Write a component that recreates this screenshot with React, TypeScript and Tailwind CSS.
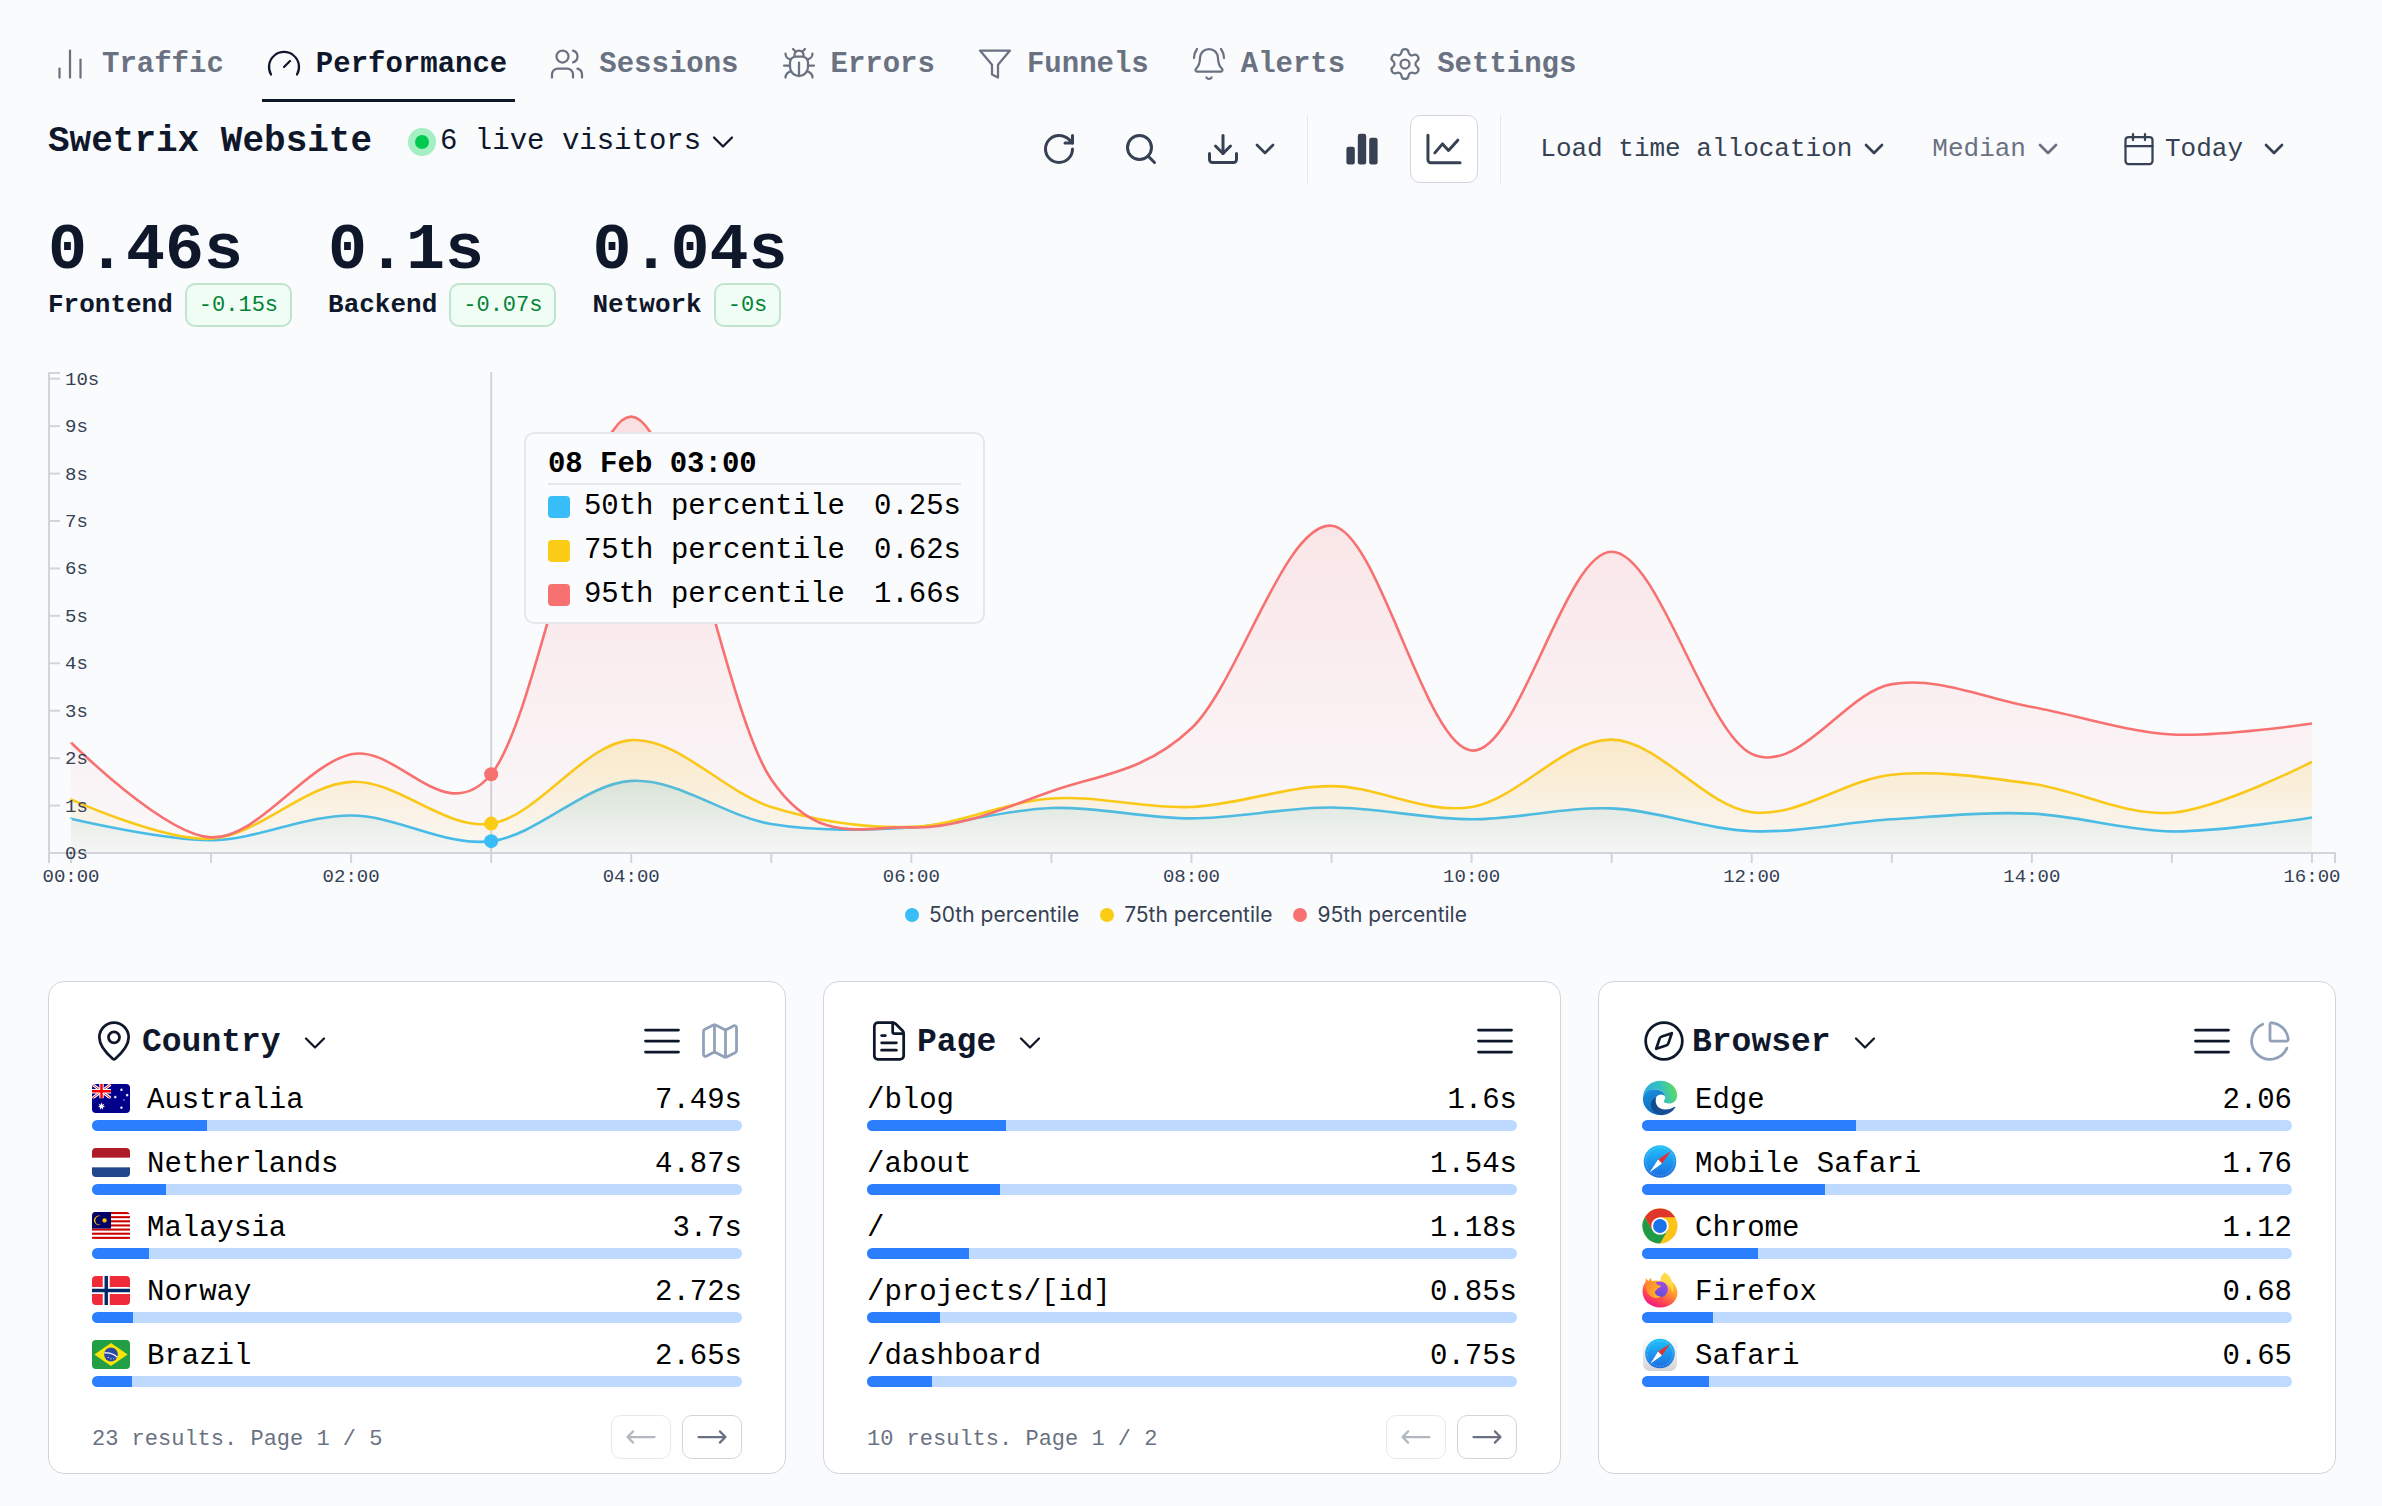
import React from "react";
import {
  BellRing,
  Bug,
  Calendar,
  ChartNoAxesColumn,
  ChartPie,
  ChevronDown,
  Compass,
  Download,
  FileText,
  Gauge,
  Map as MapIcon,
  MapPin,
  RotateCw,
  Search,
  Settings,
  Users,
} from "lucide-react";

/* ---------- Small icons ---------- */

type IconProps = { className?: string; strokeWidth?: number };

function FunnelIcon({ className, strokeWidth = 1.5 }: IconProps) {
  return (
    <svg viewBox="0 0 24 24" className={className} fill="none" stroke="currentColor" strokeWidth={strokeWidth} strokeLinecap="round" strokeLinejoin="round" aria-hidden="true">
      <path d="M22 3H2l8 9.46V19l4 2v-8.54L22 3z" />
    </svg>
  );
}

function LinesIcon({ className }: IconProps) {
  return (
    <svg viewBox="0 0 24 24" className={className} fill="none" stroke="currentColor" strokeWidth={1.5} strokeLinecap="round" aria-hidden="true">
      <path d="M3 6h18M3 12h18M3 18h18" />
    </svg>
  );
}

function BarsIcon({ className }: IconProps) {
  return (
    <svg viewBox="0 0 24 24" className={className} fill="currentColor" aria-hidden="true">
      <rect x="1.6" y="10.5" width="5.6" height="11.8" rx="1.5" />
      <rect x="9.2" y="1.8" width="5.6" height="20.5" rx="1.5" />
      <rect x="16.8" y="4.5" width="5.6" height="17.8" rx="1.5" />
    </svg>
  );
}

function LineChartIcon({ className }: IconProps) {
  return (
    <svg viewBox="0 0 24 24" className={className} fill="none" stroke="currentColor" strokeWidth={2} strokeLinecap="round" strokeLinejoin="round" aria-hidden="true">
      <path d="M1.300 2.800V19.200a2 2 0 0 0 2 2H22.700" />
      <path d="M5.900 14.600 11 8.600l4 4.400 6.200-6.900" />
    </svg>
  );
}

function LongArrow({ flip }: { flip?: boolean }) {
  return (
    <svg viewBox="0 0 24 24" className="size-9" fill="none" stroke="currentColor" strokeWidth={1.5} strokeLinecap="round" strokeLinejoin="round" aria-hidden="true">
      <path d={flip ? "M6.75 15.75 3 12m0 0 3.75-3.75M3 12h18" : "M17.25 8.25 21 12m0 0-3.75 3.75M21 12H3"} />
    </svg>
  );
}

/* ---------- Flags ---------- */

function star(cx: number, cy: number, r: number, points: number, inner: number) {
  return Array.from({ length: points * 2 }, (_, i) => {
    const a = (Math.PI * i) / points - Math.PI / 2;
    const d = i % 2 ? r * inner : r;
    return `${(cx + d * Math.cos(a)).toFixed(2)},${(cy + d * Math.sin(a)).toFixed(2)}`;
  }).join(" ");
}

function Flag({ label, children }: { label: string; children: React.ReactNode }) {
  return (
    <svg viewBox="0 0 40 30" preserveAspectRatio="none" role="img" aria-label={label} className="h-[29px] w-[38px] shrink-0 rounded">
      {children}
    </svg>
  );
}

const australia = (
  <Flag label="Flag of Australia">
    <rect width="40" height="30" fill="#00008b" />
    <path d="M0 0 20 15M20 0 0 15" stroke="#fff" strokeWidth="3" />
    <path d="M0 0 20 15M20 0 0 15" stroke="#e8112d" strokeWidth="1" />
    <path d="M10 0v15M0 7.500h20" stroke="#fff" strokeWidth="4.600" />
    <path d="M10 0v15M0 7.500h20" stroke="#f00" strokeWidth="2.600" />
    <path d="M0 15h20.200V0H22v17H0z" fill="#00008b" />
    <g fill="#fff">
      <polygon points={star(10, 23, 4, 7, 0.45)} />
      <polygon points={star(31, 6, 1.8, 7, 0.5)} />
      <polygon points={star(24.5, 13.5, 1.8, 7, 0.5)} />
      <polygon points={star(37, 11.5, 1.8, 7, 0.5)} />
      <polygon points={star(31, 24.5, 1.8, 7, 0.5)} />
      <polygon points={star(33.6, 16.6, 1, 5, 0.5)} />
    </g>
  </Flag>
);

const netherlands = (
  <Flag label="Flag of the Netherlands">
    <rect width="40" height="30" fill="#fff" />
    <rect width="40" height="10" fill="#ae1c28" />
    <rect y="20" width="40" height="10" fill="#21468b" />
  </Flag>
);

const malaysia = (
  <Flag label="Flag of Malaysia">
    <rect width="40" height="30" fill="#fff" />
    {[0, 1, 2, 3, 4, 5, 6].map((i) => (
      <rect key={i} y={i * 4.28} width="40" height="2.14" fill="#cc0000" />
    ))}
    <rect width="20" height="17.1" fill="#000066" />
    <path d="M9.800 4.600a4.900 4.900 0 1 0 0 8.200 4.500 4.500 0 1 1 0-8.200z" fill="#ffcc00" />
    <polygon points={star(13.2, 8.7, 2.9, 14, 0.6)} fill="#ffcc00" />
  </Flag>
);

const norway = (
  <Flag label="Flag of Norway">
    <rect width="40" height="30" fill="#ef2b3a" />
    <path d="M15 0v30M0 15h40" stroke="#fff" strokeWidth="7.4" />
    <path d="M15 0v30M0 15h40" stroke="#002868" strokeWidth="3.6" />
  </Flag>
);

const brazil = (
  <Flag label="Flag of Brazil">
    <rect width="40" height="30" fill="#229e45" />
    <polygon points="2.5,15 20,3.2 37.5,15 20,26.8" fill="#f8e509" />
    <circle cx="20" cy="15" r="7.2" fill="#2b49a3" />
    <path d="M13 13.4c5-.6 10 1 13.6 4.4" fill="none" stroke="#fff" strokeWidth="1.3" />
    <g fill="#fff">
      <circle cx="17" cy="18" r=".6" />
      <circle cx="20" cy="19.5" r=".6" />
      <circle cx="22.5" cy="18.8" r=".5" />
    </g>
  </Flag>
);

/* ---------- Browser logos ---------- */

function Logo({ label, children }: { label: string; children: React.ReactNode }) {
  return (
    <svg viewBox="0 0 36 36" role="img" aria-label={label} className="size-9 shrink-0">
      {children}
    </svg>
  );
}

const edge = (
  <Logo label="Edge">
    <defs>
      <linearGradient id="edge-top" x1="0" y1="0.6" x2="1" y2="0.4">
        <stop offset="0" stopColor="#2aa9e0" />
        <stop offset="0.55" stopColor="#35c1c0" />
        <stop offset="1" stopColor="#5fdc5c" />
      </linearGradient>
      <linearGradient id="edge-left" x1="0.2" y1="0" x2="0.6" y2="1">
        <stop offset="0" stopColor="#1a8fdc" />
        <stop offset="1" stopColor="#0c68b8" />
      </linearGradient>
      <linearGradient id="edge-low" x1="0" y1="0" x2="1" y2="1">
        <stop offset="0" stopColor="#114a8b" />
        <stop offset="1" stopColor="#1b4f9e" />
      </linearGradient>
    </defs>
    <path d="M1 17C1.700 7.500 9 .8 18.300.8 28.500.8 35.200 8 35.200 15.200c0 5-3.600 8.300-8.200 8.300-3.300 0-5.300-1.200-5.300-2.300 0-.8 1.500-1.500 1.500-4C23.200 13 19 9.600 13.500 9.600 7 9.600 2.500 13 1 17z" fill="url(#edge-top)" />
    <path d="M.9 18.500C1.200 12.600 7 9.400 12.800 9.400c5.800 0 9.800 3.200 10.300 7-1-1.300-2.600-2-4-2-4 0-7 4.200-7 8.800 0 6 4.200 10.500 9.200 11.700C9.500 36.300.6 28 .9 18.500z" fill="url(#edge-left)" />
    <path d="M14.200 17.600c-2 6.400 2 12 9.300 12 3.700 0 6.600-1.200 9.100-2.800.6-.3 1 .2.600.8-3 4.700-8 7.600-13.800 7.600-6.600-.9-10.400-6-10.400-11 0-3 2-5.600 5.200-6.600z" fill="url(#edge-low)" />
  </Logo>
);

function SafariDial({ r, id }: { r: number; id: string }) {
  const t = r * 0.86;
  return (
    <>
      <defs>
        <linearGradient id={id} x1="0" y1="0" x2="0" y2="1">
          <stop offset="0" stopColor="#1fc3fb" />
          <stop offset="1" stopColor="#1b6be0" />
        </linearGradient>
      </defs>
      <circle cx="18" cy="17.500" r={r} fill={`url(#${id})`} />
      <circle cx="18" cy="17.500" r={t} fill="none" stroke="#fff" strokeOpacity="0.4" strokeWidth="1.400" strokeDasharray="0.5 1.3" />
      <g transform="translate(18 17.5)">
        <path d={`M${r * 0.68} ${-r * 0.64} 1.900 1.900-1.900-1.900z`} fill="#e5332f" />
        <path d={`M${-r * 0.64} ${r * 0.68}-1.900-1.900 1.900 1.900z`} fill="#fff" />
      </g>
    </>
  );
}

const mobileSafari = (
  <Logo label="Mobile Safari">
    <SafariDial r={16.3} id="safari-mobile" />
  </Logo>
);

const safari = (
  <Logo label="Safari">
    <defs>
      <linearGradient id="safari-tile" x1="0" y1="0" x2="0" y2="1">
        <stop offset="0" stopColor="#ffffff" />
        <stop offset="1" stopColor="#d4d4d6" />
      </linearGradient>
    </defs>
    <rect x="1" y="1" width="34" height="34" rx="7" fill="url(#safari-tile)" />
    <SafariDial r={14.8} id="safari-desktop" />
  </Logo>
);

const chrome = (
  <Logo label="Chrome">
    <circle cx="18" cy="18" r="17.500" fill="#fcc419" />
    <path d="M2.840 9.250A17.500 17.500 0 0 1 33.160 9.250H18L10.420 22.380z" fill="#e0352b" />
    <path d="M2.840 9.250 10.420 22.380 25.580 22.380 18 35.500A17.500 17.500 0 0 1 2.840 9.250z" fill="#1f9a48" />
    <circle cx="18" cy="18" r="8.700" fill="#fff" />
    <circle cx="18" cy="18" r="6.900" fill="#1a73e8" />
  </Logo>
);

const firefox = (
  <Logo label="Firefox">
    <defs>
      <linearGradient id="fox-body" x1="0.8" y1="0.1" x2="0.3" y2="1">
        <stop offset="0" stopColor="#ffe14d" />
        <stop offset="0.4" stopColor="#ff9a2e" />
        <stop offset="0.75" stopColor="#ff4355" />
        <stop offset="1" stopColor="#f0148c" />
      </linearGradient>
      <linearGradient id="fox-globe" x1="0.7" y1="0" x2="0.3" y2="1">
        <stop offset="0" stopColor="#a04be8" />
        <stop offset="1" stopColor="#5f4fd8" />
      </linearGradient>
      <linearGradient id="fox-head" x1="0" y1="0" x2="1" y2="0.6">
        <stop offset="0" stopColor="#ff7d2b" />
        <stop offset="1" stopColor="#ffb62e" />
      </linearGradient>
    </defs>
    <path d="M22.500.5c5.500 3.500 6.800 7 7.300 9.300 3.700 2.800 5.700 7 5.700 11C35.500 29 28 35.500 18.300 35.500 8.300 35.500.5 28.500.5 19.200.5 15.500 1.800 12.200 3.400 10.300L3.900 6.200 6.500 9l2-3.200 1.600 3.500c3-1.200 6-.8 8.400.3C18.400 5.500 20.500 2.500 22.500.5z" fill="url(#fox-body)" />
    <path d="M22.500.5c5.500 3.500 6.800 7 7.300 9.300 2 4 2.200 8 .7 11.500-1-6-5-10.300-12-11.700C18.400 5.500 20.500 2.500 22.500.5z" fill="#ffdc4a" fillOpacity="0.85" />
    <circle cx="18" cy="17.300" r="7.900" fill="url(#fox-globe)" />
    <path d="M3.500 12c4-3.500 9.500-3 12.500 1.200l2.700.2c.5 1.300-1.200 2.200-3.300 3-.7 2.200-2.800 2.300-2.400 4.300.5 2.500 3 3.600 5.500 3.300-1.500 2.500-8.500 3.500-12-2C4.800 19.500 3.500 15.500 3.500 12z" fill="url(#fox-head)" />
  </Logo>
);

/* ---------- Navigation ---------- */

const tabs = [
  { label: "Traffic", Icon: ChartNoAxesColumn },
  { label: "Performance", Icon: Gauge, active: true },
  { label: "Sessions", Icon: Users },
  { label: "Errors", Icon: Bug },
  { label: "Funnels", Icon: FunnelIcon },
  { label: "Alerts", Icon: BellRing },
  { label: "Settings", Icon: Settings },
];

function Tabs() {
  return (
    <nav aria-label="Project sections" className="flex gap-[30px] pt-7">
      {tabs.map(({ label, Icon, active }) => (
        <a
          key={label}
          href="#"
          aria-current={active ? "page" : undefined}
          className={
            active
              ? "flex h-[74px] items-center gap-3.5 border-b-[3px] border-slate-900 pl-1 pr-2 text-[29px] font-bold text-slate-900"
              : "flex h-[74px] items-center gap-3.5 border-b-[3px] border-transparent pl-1 pr-2 text-[29px] font-bold text-gray-500"
          }
        >
          <Icon className="size-9" strokeWidth={1.5} />
          <span className="pt-0.5">{label}</span>
        </a>
      ))}
    </nav>
  );
}

/* ---------- Header ---------- */

function Header() {
  return (
    <header className="mt-[13px] flex items-start justify-between">
      <div className="flex h-[54px] items-center">
        <h1 className="text-4xl font-bold text-slate-900">Swetrix Website</h1>
        <button type="button" className="ml-9 flex items-center text-[29px] text-slate-900">
          <span className="mr-1 flex size-7 items-center justify-center rounded-full bg-[#a4efc3]">
            <span className="size-3.5 rounded-full bg-[#00c950]" />
          </span>
          6 live visitors
          <ChevronDown className="ml-1 size-9" strokeWidth={1.5} />
        </button>
      </div>

      <div className="flex h-[68px] items-center pr-[46px] text-[26px] text-gray-700">
        <button type="button" aria-label="Refresh" className="p-[23px]">
          <RotateCw className="size-9" />
        </button>
        <button type="button" aria-label="Search" className="p-[23px]">
          <Search className="size-9" />
        </button>
        <button type="button" aria-label="Export data" className="flex items-center gap-2 py-4 pl-[23px] pr-[26px]">
          <Download className="size-9" />
          <ChevronDown className="size-8" />
        </button>
        <div className="h-full border-l border-gray-200" />
        <button type="button" aria-label="Bar chart" className="ml-5 flex size-[68px] items-center justify-center">
          <BarsIcon className="size-9" />
        </button>
        <button type="button" aria-label="Line chart" aria-pressed="true" className="ml-3.5 flex size-[68px] items-center justify-center rounded-[10px] border border-gray-300 bg-white">
          <LineChartIcon className="size-9" />
        </button>
        <div className="ml-[22px] h-full border-l border-gray-200" />
        <button type="button" aria-haspopup="listbox" className="ml-[39px] flex items-center gap-1.5">
          Load time allocation
          <ChevronDown className="size-8" />
        </button>
        <button type="button" aria-haspopup="listbox" className="ml-[42px] flex items-center gap-1.5 text-gray-500">
          Median
          <ChevronDown className="size-8" />
        </button>
        <button type="button" aria-haspopup="listbox" className="ml-[57px] flex items-center">
          <Calendar className="mr-2 size-9" strokeWidth={1.5} />
          Today
          <ChevronDown className="ml-[15px] size-8" />
        </button>
      </div>
    </header>
  );
}

/* ---------- Metrics ---------- */

const metrics = [
  { value: "0.46s", label: "Frontend", change: "-0.15s" },
  { value: "0.1s", label: "Backend", change: "-0.07s" },
  { value: "0.04s", label: "Network", change: "-0s" },
];

function Metrics() {
  return (
    <dl className="mt-9 flex gap-9 text-slate-900">
      {metrics.map((m) => (
        <div key={m.label} className="flex flex-col-reverse">
          <dt className="flex items-center gap-3 text-[26px] font-bold">
            {m.label}
            <span className="flex h-11 items-center rounded-[10px] border-2 border-green-700/20 bg-green-50 px-3 text-[22px] font-normal text-green-700">
              {m.change}
            </span>
          </dt>
          <dd className="text-[65px] leading-[64px] font-bold">{m.value}</dd>
        </div>
      ))}
    </dl>
  );
}

/* ---------- Chart ---------- */

const series = [
  {
    name: "50th percentile",
    id: "p50",
    color: "#38bdf8",
    dot: "bg-[#38bdf8]",
    now: "0.25s",
    data: [0.72, 0.27, 0.79, 0.25, 1.52, 0.61, 0.54, 0.95, 0.73, 0.96, 0.71, 0.94, 0.46, 0.71, 0.83, 0.455, 0.75],
  },
  {
    name: "75th percentile",
    id: "p75",
    color: "#facc15",
    dot: "bg-[#facc15]",
    now: "0.62s",
    data: [1.13, 0.3, 1.5, 0.62, 2.38, 0.97, 0.55, 1.15, 0.97, 1.41, 0.97, 2.39, 0.86, 1.65, 1.46, 0.85, 1.92],
  },
  {
    name: "95th percentile",
    id: "p95",
    color: "#f87171",
    dot: "bg-[#f87171]",
    now: "1.66s",
    data: [2.33, 0.33, 2.08, 1.66, 9.2, 1.55, 0.54, 1.3, 2.63, 6.9, 2.16, 6.35, 2.09, 3.56, 3.08, 2.5, 2.73],
  },
];

const BASE = 482;
const UNIT = 47.43;
const px = (i: number) => 23 + i * 140.06;
const py = (v: number) => BASE - v * UNIT;

/* Cardinal spline with zero tension through the hourly points. */
function spline(data: number[]) {
  const p = data.map((v, i) => [px(i), py(v)]);
  const n = p.length;
  let d = `M${p[0][0]} ${p[0][1]}`;
  for (let i = 0; i < n - 1; i++) {
    const a = p[i];
    const b = p[i + 1];
    const before = i === 0 ? b : p[i - 1];
    const after = i === n - 2 ? a : p[i + 2];
    const c = [a[0] + (b[0] - before[0]) / 6, a[1] + (b[1] - before[1]) / 6, b[0] + (a[0] - after[0]) / 6, b[1] + (a[1] - after[1]) / 6];
    d += `C${c.map((v) => v.toFixed(2)).join(" ")} ${b[0].toFixed(2)} ${b[1].toFixed(2)}`;
  }
  return d;
}

function Chart() {
  const hours = Array.from({ length: 17 }, (_, i) => i);
  return (
    <section aria-label="Load time chart" className="relative mt-11">
      <svg viewBox="0 0 2288 520" className="block h-auto w-full overflow-visible" role="img" aria-label="Load time percentiles by hour">
        <defs>
          {series.map((s) => (
            <linearGradient key={s.id} id={s.id} x1="0" y1="0" x2="0" y2="1">
              <stop offset="0" stopColor={s.color} stopOpacity="0.2" />
              <stop offset="1" stopColor={s.color} stopOpacity="0.02" />
            </linearGradient>
          ))}
        </defs>
        <path d={`M${px(3)} 1V482`} stroke="#d4d4d8" strokeWidth="2" />
        {series.map((s) => (
          <g key={s.id}>
            <path d={`${spline(s.data)}L${px(16)} ${BASE}L${px(0)} ${BASE}Z`} fill={`url(#${s.id})`} />
            <path d={spline(s.data)} fill="none" stroke={s.color} strokeWidth="2.6" />
          </g>
        ))}
        <g stroke="#d1d5db" strokeWidth="2" fill="none">
          <path d="M12 2H1V482H2287V492M1 482V492" />
          {Array.from({ length: 11 }, (_, i) => (
            <path key={i} d={`M1 ${py(i)}H12`} />
          ))}
          {hours.map((i) => (
            <path key={i} d={`M${px(i)} 482V492`} />
          ))}
        </g>
        {series.map((s) => (
          <circle key={s.id} cx={px(3)} cy={py(s.data[3])} r="7" fill={s.color} />
        ))}
        <g className="fill-gray-700 text-[19px]">
          {Array.from({ length: 11 }, (_, i) => (
            <text key={i} x="17" y={py(i) + 6}>
              {i}s
            </text>
          ))}
          {hours
            .filter((i) => i % 2 === 0)
            .map((i) => (
              <text key={i} x={px(i)} y="511" textAnchor="middle">
                {String(i).padStart(2, "0")}:00
              </text>
            ))}
        </g>
      </svg>

      <div className="absolute top-[61px] left-[20.8%] rounded-[10px] border-2 border-gray-200 bg-[#fafbfd] px-[22px] pt-3 pb-[5px] text-[29px] text-black">
        <p className="border-b-2 border-gray-200 leading-[37px] font-bold">08 Feb 03:00</p>
        <ul>
          {series.map((s) => (
            <li key={s.id} className="flex h-11 items-center">
              <span className={`mr-3.5 size-[22px] rounded ${s.dot}`} />
              {s.name}
              <span className="ml-auto pl-[29px]">{s.now}</span>
            </li>
          ))}
        </ul>
      </div>

      <ul className="mt-2 flex h-8 items-center justify-center gap-[21px] pr-3 font-['Inter',sans-serif] text-[21px] text-gray-700">
        {series.map((s) => (
          <li key={s.id} className="flex items-center gap-2.5">
            <span className={`size-3.5 rounded-full ${s.dot}`} />
            {s.name}
          </li>
        ))}
      </ul>
    </section>
  );
}

/* ---------- Panels ---------- */

type Row = { name: string; value: string; share: number; icon?: React.ReactNode };

type PanelProps = {
  title: string;
  Icon: React.ComponentType<IconProps>;
  AltIcon?: React.ComponentType<IconProps>;
  altLabel?: string;
  rows: Row[];
  results?: string;
};

function Panel({ title, Icon, AltIcon, altLabel, rows, results }: PanelProps) {
  return (
    <section className="rounded-2xl border border-gray-300 bg-white px-[43px] pt-[37px] pb-3.5">
      <div className="flex h-11 items-center text-slate-900">
        <Icon className="size-11" strokeWidth={1.5} />
        <h2 className="ml-1.5 pt-1 text-[33px] font-bold">{title}</h2>
        <button type="button" aria-label={`Change ${title} panel`} className="ml-4 pt-1">
          <ChevronDown className="size-9" strokeWidth={1.5} />
        </button>
        <div className="ml-auto flex gap-3.5">
          <button type="button" aria-label="List view">
            <LinesIcon className="size-11" />
          </button>
          {AltIcon && (
            <button type="button" aria-label={altLabel} className="text-slate-400">
              <AltIcon className="size-11" strokeWidth={1.5} />
            </button>
          )}
        </div>
      </div>

      <ul className="mt-[17px] flex flex-col gap-[13px] text-[29px] text-black">
        {rows.map((r) => (
          <li key={r.name}>
            <div className="flex h-9 items-center">
              {r.icon && <span className="mr-[17px]">{r.icon}</span>}
              <span className="pt-1.5">{r.name}</span>
              <span className="ml-auto pt-1.5">{r.value}</span>
            </div>
            <div className="mt-1 h-[11px] overflow-hidden rounded-full bg-[#bedbff]">
              <div className="h-full bg-[#2b7fff]" style={{ width: `${r.share}%` }} />
            </div>
          </li>
        ))}
      </ul>

      {results && (
        <div className="mt-7 flex items-center justify-between text-gray-500">
          <p className="pt-1 text-[22px]">{results}</p>
          <div className="flex gap-[11px]">
            <button type="button" disabled aria-label="Previous page" className="flex h-11 w-[60px] items-center justify-center rounded-[10px] border border-gray-300 opacity-50">
              <LongArrow flip />
            </button>
            <button type="button" aria-label="Next page" className="flex h-11 w-[60px] items-center justify-center rounded-[10px] border border-gray-300">
              <LongArrow />
            </button>
          </div>
        </div>
      )}
    </section>
  );
}

const countries: Row[] = [
  { name: "Australia", value: "7.49s", share: 17.7, icon: australia },
  { name: "Netherlands", value: "4.87s", share: 11.4, icon: netherlands },
  { name: "Malaysia", value: "3.7s", share: 8.7, icon: malaysia },
  { name: "Norway", value: "2.72s", share: 6.3, icon: norway },
  { name: "Brazil", value: "2.65s", share: 6.2, icon: brazil },
];

const pages: Row[] = [
  { name: "/blog", value: "1.6s", share: 21.4 },
  { name: "/about", value: "1.54s", share: 20.5 },
  { name: "/", value: "1.18s", share: 15.7 },
  { name: "/projects/[id]", value: "0.85s", share: 11.3 },
  { name: "/dashboard", value: "0.75s", share: 10 },
];

const browsers: Row[] = [
  { name: "Edge", value: "2.06", share: 32.9, icon: edge },
  { name: "Mobile Safari", value: "1.76", share: 28.1, icon: mobileSafari },
  { name: "Chrome", value: "1.12", share: 17.9, icon: chrome },
  { name: "Firefox", value: "0.68", share: 10.9, icon: firefox },
  { name: "Safari", value: "0.65", share: 10.3, icon: safari },
];

export default function App() {
  return (
    <main className="min-h-screen bg-[#fafbfd] pr-[46px] pb-[30px] pl-12 font-['Liberation_Mono',monospace]">
      <Tabs />
      <Header />
      <Metrics />
      <Chart />
      <div className="mt-[50px] grid grid-cols-3 gap-[37px]">
        <Panel title="Country" Icon={MapPin} AltIcon={MapIcon} altLabel="Map view" rows={countries} results="23 results. Page 1 / 5" />
        <Panel title="Page" Icon={FileText} rows={pages} results="10 results. Page 1 / 2" />
        <Panel title="Browser" Icon={Compass} AltIcon={ChartPie} altLabel="Chart view" rows={browsers} />
      </div>
    </main>
  );
}
